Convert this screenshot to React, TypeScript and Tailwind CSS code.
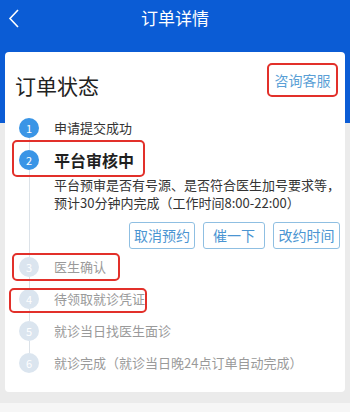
import React from "react";

type Step = {
  no: number;
  label: string;
  active?: boolean;
  current?: boolean;
  mark?: string;
};

const steps: Step[] = [
  { no: 1, label: "申请提交成功", active: true },
  { no: 2, label: "平台审核中", active: true, current: true, mark: "left-[-7px] top-[-4px] h-[37px] w-[133px]" },
  { no: 3, label: "医生确认", mark: "left-[-7px] top-[2px] h-[28px] w-[108px]" },
  { no: 4, label: "待领取就诊凭证", mark: "left-[-10px] top-[5px] h-[25px] w-[138px]" },
  { no: 5, label: "就诊当日找医生面诊" },
  { no: 6, label: "就诊完成（就诊当日晚24点订单自动完成）" },
];

function StepRow({ step, first, last }: { step: Step; first: boolean; last: boolean }) {
  return (
    <div className="relative flex">
      <div className="flex w-[20px] shrink-0 flex-col items-center">
        <div className={`h-[6px] w-px ${first ? "bg-transparent" : "bg-[#dce2e8]"}`} />
        <div
          className={`grid h-[20px] w-[20px] place-items-center rounded-full text-[11px] text-white ${
            step.active ? "bg-[#3a95e6]" : "bg-[#dbe5ef]"
          }`}
        >
          {step.no}
        </div>
        <div className={`w-px flex-1 ${last ? "bg-transparent" : "bg-[#dce2e8]"}`} />
      </div>
      <div className="ml-[15px] flex-1 pr-[10px]">
        <div
          className={`flex h-[32px] items-center whitespace-nowrap ${
            step.current
              ? "text-[16px] font-bold text-[#1f1f1f]"
              : step.active
              ? "text-[13px] text-[#333]"
              : "text-[13px] text-[#9a9a9a]"
          }`}
        >
          {step.label}
        </div>
        {step.current ? (
          <div className="pb-[2px]">
            <p className="whitespace-nowrap text-[13px] leading-[18px] text-[#333]">
              平台预审是否有号源、是否符合医生加号要求等，
              <br />
              预计30分钟内完成（工作时间8:00-22:00）
            </p>
            <div className="mt-[10px] flex justify-end gap-[8px]">
              <button className="h-[27px] w-[66px] rounded-[3px] border border-[#8fbfe2] text-[14px] text-[#4b95d2]">
                取消预约
              </button>
              <button className="h-[27px] w-[62px] rounded-[3px] border border-[#8fbfe2] text-[14px] text-[#4b95d2]">
                催一下
              </button>
              <button className="h-[27px] w-[67px] rounded-[3px] border border-[#8fbfe2] text-[14px] text-[#4b95d2]">
                改约时间
              </button>
            </div>
          </div>
        ) : null}
      </div>
      {step.mark ? (
        <div className={`pointer-events-none absolute rounded-[5px] border-2 border-[#e2302a] ${step.mark}`} />
      ) : null}
    </div>
  );
}

export default function App() {
  return (
    <div
      className="relative h-[412px] w-[350px] overflow-hidden bg-[#ebebeb]"
      style={{ fontFamily: '"Noto Sans CJK SC", "Noto Sans", sans-serif' }}
    >
      <div className="h-[123px] bg-[#0b5cd5]">
        <div className="relative flex h-[36px] items-center justify-center">
          <svg
            className="absolute left-[8px] top-[9px]"
            width="12"
            height="19"
            viewBox="0 0 12 19"
            fill="none"
            stroke="white"
            strokeWidth="1.6"
          >
            <polyline points="10,1 2,9.5 10,18" />
          </svg>
          <span className="text-[17px] text-white">订单详情</span>
        </div>
      </div>

      <div className="mx-[5px] mt-[-71px] h-[340px] rounded-[4px] bg-white">
        <div className="flex h-[60px] items-start justify-between pl-[10px] pr-[7px] pt-[11px]">
          <h1 className="mt-[11px] text-[21px] leading-[22px] text-[#222]">订单状态</h1>
          <a className="flex h-[34px] w-[71px] items-center justify-center rounded-[5px] border-2 border-[#e2302a] text-[14px] text-[#5a9fd6]">
            咨询客服
          </a>
        </div>
        <div className="pl-[14px]">
          {steps.map((s, i) => (
            <StepRow key={s.no} step={s} first={i === 0} last={i === steps.length - 1} />
          ))}
        </div>
      </div>
      <div className="mt-[11px] h-[20px] bg-[#f6f6f6]" />
    </div>
  );
}
